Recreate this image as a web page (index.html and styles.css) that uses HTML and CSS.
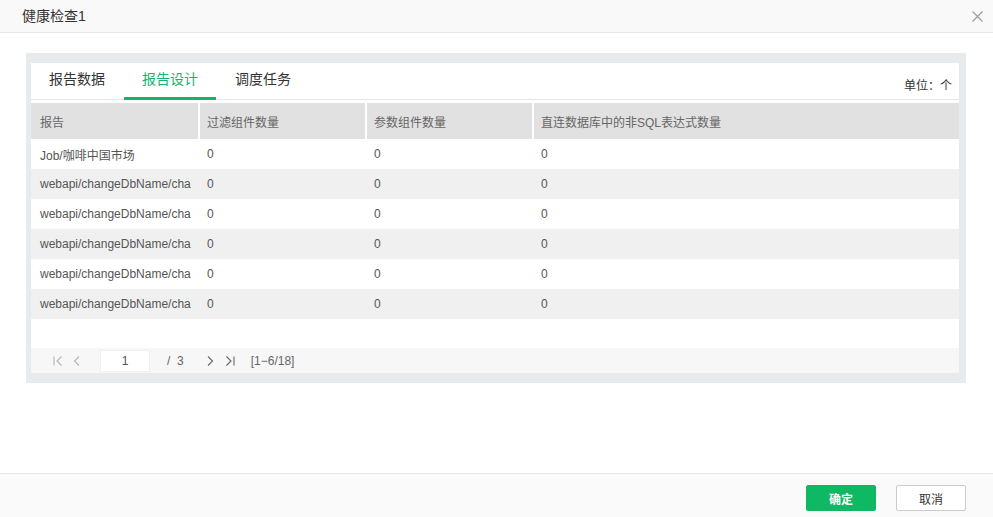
FILE: index.html
```html
<!DOCTYPE html>
<html lang="zh">
<head>
<meta charset="utf-8">
<title>健康检查1</title>
<link rel="stylesheet" href="styles.css">
</head>
<body>
<div class="dialog">
  <div class="dlg-head">
    <span class="dlg-title">健康检查1</span>
    <svg class="dlg-close" width="11" height="11" viewBox="0 0 11 11"><path d="M0.5 0.5 L10.5 10.5 M10.5 0.5 L0.5 10.5" stroke="#9a9a9a" stroke-width="1.1" fill="none"/></svg>
  </div>
  <div class="dlg-body">
    <div class="panel">
      <div class="inner">
        <div class="tabbar">
          <div class="tab">报告数据</div>
          <div class="tab active">报告设计</div>
          <div class="tab">调度任务</div>
          <div class="unit">单位：个</div>
        </div>
        <div class="table">
          <div class="row head">
            <div class="cell first">报告</div>
            <div class="cell">过滤组件数量</div>
            <div class="cell">参数组件数量</div>
            <div class="cell last">直连数据库中的非SQL表达式数量</div>
          </div>
          <div class="row">
            <div class="cell first">Job/咖啡中国市场</div><div class="cell">0</div><div class="cell">0</div><div class="cell last">0</div>
          </div>
          <div class="row alt">
            <div class="cell first">webapi/changeDbName/cha</div><div class="cell">0</div><div class="cell">0</div><div class="cell last">0</div>
          </div>
          <div class="row">
            <div class="cell first">webapi/changeDbName/cha</div><div class="cell">0</div><div class="cell">0</div><div class="cell last">0</div>
          </div>
          <div class="row alt">
            <div class="cell first">webapi/changeDbName/cha</div><div class="cell">0</div><div class="cell">0</div><div class="cell last">0</div>
          </div>
          <div class="row">
            <div class="cell first">webapi/changeDbName/cha</div><div class="cell">0</div><div class="cell">0</div><div class="cell last">0</div>
          </div>
          <div class="row alt">
            <div class="cell first">webapi/changeDbName/cha</div><div class="cell">0</div><div class="cell">0</div><div class="cell last">0</div>
          </div>
          <div class="spacer"></div>
          <div class="pager">
            <svg class="pg-icon" width="10" height="10" viewBox="0 0 10 10"><path d="M1 0.5 V9.5 M8.5 0.5 L4 5 L8.5 9.5" stroke="#b5b5b5" stroke-width="1.1" fill="none"/></svg>
            <svg class="pg-icon prev" width="7" height="10" viewBox="0 0 7 10"><path d="M6 0.5 L1.5 5 L6 9.5" stroke="#b5b5b5" stroke-width="1.1" fill="none"/></svg>
            <div class="pg-input">1</div>
            <span class="pg-total">/&nbsp;&nbsp;3</span>
            <svg class="pg-icon next" width="7" height="10" viewBox="0 0 7 10"><path d="M1 0.5 L5.5 5 L1 9.5" stroke="#666" stroke-width="1.1" fill="none"/></svg>
            <svg class="pg-icon last" width="10" height="10" viewBox="0 0 10 10"><path d="M1.5 0.5 L6 5 L1.5 9.5 M9 0.5 V9.5" stroke="#666" stroke-width="1.1" fill="none"/></svg>
            <span class="pg-range">[1−6/18]</span>
          </div>
        </div>
      </div>
    </div>
  </div>
  <div class="dlg-foot">
    <button class="btn primary">确定</button>
    <button class="btn">取消</button>
  </div>
</div>
</body>
</html>
```
FILE: styles.css
```css
* { box-sizing: border-box; }
html, body { margin: 0; padding: 0; }
body {
  width: 993px;
  height: 517px;
  background: #fff;
  font-family: "Liberation Sans", "Noto Sans CJK SC", sans-serif;
  color: #333;
  overflow: hidden;
}
.dialog { display: flex; flex-direction: column; height: 517px; }
.dlg-head {
  height: 33px;
  background: #f9f9f9;
  border-bottom: 1px solid #e8e8e8;
  display: flex;
  align-items: center;
  justify-content: space-between;
  padding: 0 10px 2px 22px;
}
.dlg-title { font-size: 14px; color: #333; }
.dlg-close { margin-top: 3px; }
.dlg-body {
  flex: 1;
  padding: 20px 27px 0 26px;
}
.panel {
  background: #e8ebee;
  padding: 10px 7px 10px 5px;
}
.inner {
  background: #fff;
  height: 310px;
  display: flex;
  flex-direction: column;
}
.tabbar {
  display: flex;
  gap: 1px;
  border-bottom: 1px solid #e5e5e5;
  height: 37px;
}
.tab {
  width: 92px;
  text-align: center;
  font-size: 14px;
  line-height: 32px;
  height: 37px;
  padding-bottom: 2px;
  border-bottom: 3px solid transparent;
  margin-bottom: -1px;
  color: #333;
}
.tab.active { color: #12b46a; border-bottom-color: #12b46a; }
.unit {
  margin-left: auto;
  align-self: flex-end;
  font-size: 12px;
  line-height: 18px;
  margin-bottom: 4px;
  margin-right: 7px;
  color: #333;
}
.table {
  flex: 1;
  display: flex;
  flex-direction: column;
  margin-top: 3px;
}
.row {
  display: grid;
  grid-template-columns: 169px 167px 167px 1fr;
  height: 30px;
  font-size: 12px;
  color: #555;
}
.row.alt { background: #f0f0f0; }
.row.head {
  height: 36px;
  background: #e1e1e1;
  color: #666;
}
.cell {
  padding-left: 7px;
  display: flex;
  align-items: center;
  white-space: nowrap;
  overflow: hidden;
}
.cell.first { padding-left: 9px; }
.row.head .cell { border-right: 2px solid #fff; }
.row.head .cell.last { border-right: none; }
.spacer { flex: 1; }
.pager {
  height: 25px;
  background: #f7f7f7;
  display: flex;
  align-items: center;
  padding-left: 22px;
  font-size: 12px;
  color: #666;
}
.pg-icon { display: block; }
.pg-icon.prev { margin-left: 10px; }
.pg-input {
  margin-left: 20px;
  width: 50px;
  height: 22px;
  background: #fff;
  border: 1px solid #f0f0f0;
  text-align: center;
  line-height: 20px;
  color: #555;
}
.pg-total { margin-left: 17px; }
.pg-icon.next { margin-left: 23px; }
.pg-icon.last { margin-left: 11px; }
.pg-range { margin-left: 16px; color: #666; }
.dlg-foot {
  height: 44px;
  border-top: 1px solid #e8e8e8;
  background: #fafafa;
  display: flex;
  justify-content: flex-end;
  align-items: flex-start;
  gap: 20px;
  padding: 11px 27px 0 0;
}
.btn {
  width: 70px;
  height: 26px;
  border: 1px solid #ccc;
  border-radius: 2px;
  background: #fff;
  font-family: inherit;
  font-size: 12px;
  color: #333;
  padding: 0;
}
.btn.primary {
  background: #0fb863;
  border-color: #0fb863;
  color: #fff;
  font-weight: bold;
}
```
